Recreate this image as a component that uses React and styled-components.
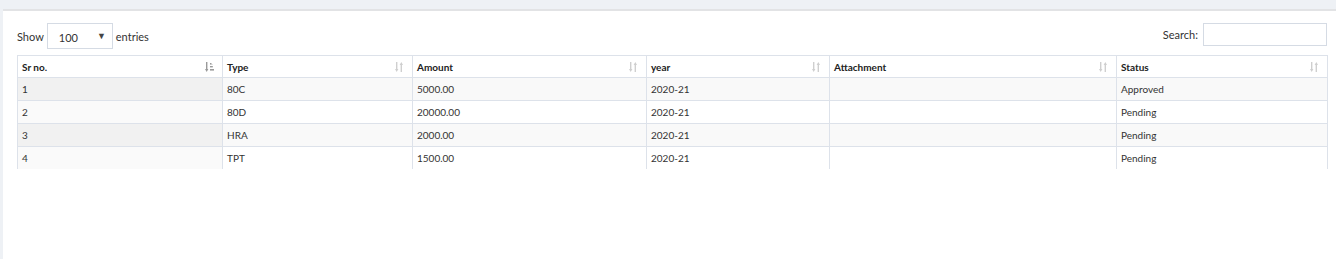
import React from 'react';
import styled, { createGlobalStyle } from 'styled-components';

const GlobalStyle = createGlobalStyle`
  body {
    margin: 0;
    background: #eef1f5;
    font-family: Lato, "Open Sans", sans-serif;
    color: #333;
  }
`;

const Page = styled.div`
  height: 259px;
  padding: 9px 0 0 3px;
  box-sizing: border-box;
  overflow: hidden;
`;

const Card = styled.div`
  background: #fff;
  border-top: 2px solid #e2e3e5;
  height: 100%;
  padding: 12px 9px 0 14px;
  box-sizing: border-box;
`;

const Controls = styled.div`
  display: flex;
  justify-content: space-between;
  align-items: flex-start;
  font-size: 11px;
  color: #333;
  margin-bottom: 6px;
`;

const Label = styled.label`
  display: flex;
  align-items: center;
  gap: ${({ gap }) => gap || 3}px;
  height: ${({ h }) => h}px;
`;

const Select = styled.div`
  width: 66px;
  height: 26px;
  box-sizing: border-box;
  border: 1px solid #d5dbe4;
  display: flex;
  align-items: center;
  justify-content: space-between;
  padding: 3px 6px 0 11px;
  font-size: 11px;
  color: #333;

  &::after {
    content: '▼';
    font-size: 9px;
    color: #444;
    margin-top: -4px;
  }
`;

const SearchInput = styled.input`
  width: 124px;
  height: 23px;
  box-sizing: border-box;
  border: 1px solid #d5dbe4;
  margin: 0;
  outline: none;
`;

const Table = styled.table`
  width: 1310px;
  border-collapse: collapse;
  table-layout: fixed;
  font-size: 10px;
  border-top: 1px solid #dde2ea;
  border-left: 1px solid #dde2ea;
  border-right: 1px solid #dde2ea;
`;

const Th = styled.th`
  height: 22px;
  padding: 0 8px 0 4px;
  text-align: left;
  font-weight: 700;
  color: #222;
  border-right: 1px solid #dde2ea;
  border-bottom: 1px solid #dde2ea;
  box-sizing: border-box;
`;

const HeadInner = styled.div`
  display: flex;
  justify-content: space-between;
  align-items: center;
`;

const Td = styled.td`
  height: 22px;
  padding: 0 4px;
  color: #333;
  border-right: 1px solid #dde2ea;
  border-bottom: ${({ last }) => (last ? 'none' : '1px solid #dde2ea')};
  background: ${({ odd, sorted }) => {
    if (sorted) return odd ? '#f1f1f1' : '#fafafa';
    return odd ? '#f9f9f9' : '#fff';
  }};
`;

const SortIcon = ({ active }) => {
  const c = active ? '#9a9a9a' : '#cfcfcf';
  return (
    <svg width="9" height="10" viewBox="0 0 9 10">
      <rect x="1" y="0" width="1.4" height="8" fill={c} />
      <path d="M0 7 L1.7 10 L3.4 7 Z" fill={c} />
      {active ? (
        <g fill={c}>
          <rect x="5" y="1" width="1.5" height="1.4" />
          <rect x="5" y="4" width="2.8" height="1.4" />
          <rect x="5" y="7" width="4" height="1.6" />
          <rect x="5" y="2.4" width="2.8" height="0.6" opacity="0.5" />
        </g>
      ) : (
        <g fill={c}>
          <rect x="5.6" y="2" width="1.4" height="8" />
          <path d="M4.6 3 L6.3 0 L8 3 Z" />
        </g>
      )}
    </svg>
  );
};

const columns = [
  { title: 'Sr no.', width: 205 },
  { title: 'Type', width: 190 },
  { title: 'Amount', width: 234 },
  { title: 'year', width: 183 },
  { title: 'Attachment', width: 287 },
  { title: 'Status', width: 211 },
];

const rows = [
  ['1', '80C', '5000.00', '2020-21', '', 'Approved'],
  ['2', '80D', '20000.00', '2020-21', '', 'Pending'],
  ['3', 'HRA', '2000.00', '2020-21', '', 'Pending'],
  ['4', 'TPT', '1500.00', '2020-21', '', 'Pending'],
];

const App = () => (
  <>
    <GlobalStyle />
    <Page>
      <Card>
        <Controls>
          <Label h={26}>
            Show
            <Select>100</Select>
            entries
          </Label>
          <Label h={23} gap={5}>
            Search:
            <SearchInput type="search" />
          </Label>
        </Controls>
        <Table>
          <colgroup>
            {columns.map(({ title, width }) => (
              <col key={title} style={{ width }} />
            ))}
          </colgroup>
          <thead>
            <tr>
              {columns.map(({ title }, i) => (
                <Th key={title}>
                  <HeadInner>
                    {title}
                    <SortIcon active={i === 0} />
                  </HeadInner>
                </Th>
              ))}
            </tr>
          </thead>
          <tbody>
            {rows.map((row, r) => (
              <tr key={row[0]}>
                {row.map((cell, c) => (
                  <Td
                    key={columns[c].title}
                    odd={r % 2 === 0}
                    sorted={c === 0}
                    last={r === rows.length - 1}
                  >
                    {cell}
                  </Td>
                ))}
              </tr>
            ))}
          </tbody>
        </Table>
      </Card>
    </Page>
  </>
);

export default App;
